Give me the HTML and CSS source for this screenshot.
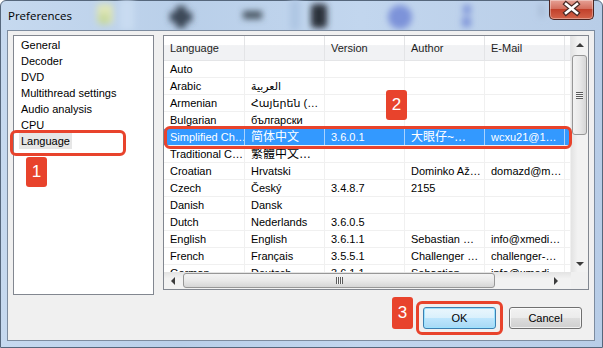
FILE: index.html
```html
<!DOCTYPE html>
<html lang="en">
<head>
  <meta charset="UTF-8">
  <title>Preferences</title>
  <link rel="stylesheet" href="styles.css">
</head>
<body>
  <div class="window">
    <div class="titlebar">
      <svg class="glass" width="603" height="30" viewBox="0 0 603 30">
        <defs>
          <filter id="fuzz" x="-50%" y="-50%" width="200%" height="200%">
            <feGaussianBlur stdDeviation="3.2"/>
          </filter>
        </defs>
        <g filter="url(#fuzz)">
          <rect x="120" y="0" width="14" height="30" fill="#c9dcf1"/>
          <rect x="290" y="0" width="10" height="30" fill="#aec6e3"/>
          <rect x="97" y="4" width="16" height="20" rx="3" fill="#dfe6b8"/>
          <circle cx="104" cy="19" r="6" fill="#c8d9a0"/>
          <rect x="176" y="6" width="10" height="22" fill="#3b4756"/>
          <rect x="170" y="12" width="22" height="10" fill="#3b4756"/>
          <rect x="243" y="11" width="19" height="8" fill="#4a5663"/>
          <rect x="311" y="4" width="16" height="24" rx="4" fill="#2c333b"/>
          <circle cx="400" cy="17" r="12" fill="#7d93d9"/>
          <rect x="463" y="5" width="8" height="9" fill="#8197da"/>
          <rect x="462" y="17" width="9" height="10" fill="#8197da"/>
          <rect x="539" y="4" width="5" height="13" fill="#a9bcd6"/>
        </g>
      </svg>
      <span class="title">Preferences</span>
      <button class="close-btn">
        <svg width="45" height="20" viewBox="0 0 45 20">
          <path d="M17 5 L28 14 M28 5 L17 14" stroke="#4a2a26" stroke-width="5" stroke-linecap="square"/>
          <path d="M17 5 L28 14 M28 5 L17 14" stroke="#fff" stroke-width="2.6" stroke-linecap="square"/>
        </svg>
      </button>
    </div>

    <div class="client">
      <ul class="pages">
        <li><span>General</span></li>
        <li><span>Decoder</span></li>
        <li><span>DVD</span></li>
        <li><span>Multithread settings</span></li>
        <li><span>Audio analysis</span></li>
        <li><span>CPU</span></li>
        <li class="current"><span>Language</span></li>
      </ul>

      <div class="right">
        <div class="listview">
          <div class="lv-top">
            <div class="lv-table">
              <div class="lv-head">
                <div class="cell">Language</div>
                <div class="cell"></div>
                <div class="cell">Version</div>
                <div class="cell">Author</div>
                <div class="cell">E-Mail</div>
                <div class="cell fill"></div>
              </div>
              <div class="lv-row"><div class="cell">Auto</div><div class="cell"></div><div class="cell"></div><div class="cell"></div><div class="cell"></div><div class="cell fill"></div></div>
              <div class="lv-row"><div class="cell">Arabic</div><div class="cell">العربية</div><div class="cell"></div><div class="cell"></div><div class="cell"></div><div class="cell fill"></div></div>
              <div class="lv-row"><div class="cell">Armenian</div><div class="cell">Հայերեն (…</div><div class="cell"></div><div class="cell"></div><div class="cell"></div><div class="cell fill"></div></div>
              <div class="lv-row"><div class="cell">Bulgarian</div><div class="cell">български</div><div class="cell"></div><div class="cell"></div><div class="cell"></div><div class="cell fill"></div></div>
              <div class="lv-row selected"><div class="cell">Simplified Ch…</div><div class="cell cjk">简体中文</div><div class="cell">3.6.0.1</div><div class="cell cjk">大眼仔~…</div><div class="cell">wcxu21@1…</div><div class="cell fill"></div></div>
              <div class="lv-row"><div class="cell">Traditional C…</div><div class="cell cjk">繁體中文…</div><div class="cell"></div><div class="cell"></div><div class="cell"></div><div class="cell fill"></div></div>
              <div class="lv-row"><div class="cell">Croatian</div><div class="cell">Hrvatski</div><div class="cell"></div><div class="cell">Dominko Až…</div><div class="cell">domazd@m…</div><div class="cell fill"></div></div>
              <div class="lv-row"><div class="cell">Czech</div><div class="cell">Český</div><div class="cell">3.4.8.7</div><div class="cell">2155</div><div class="cell"></div><div class="cell fill"></div></div>
              <div class="lv-row"><div class="cell">Danish</div><div class="cell">Dansk</div><div class="cell"></div><div class="cell"></div><div class="cell"></div><div class="cell fill"></div></div>
              <div class="lv-row"><div class="cell">Dutch</div><div class="cell">Nederlands</div><div class="cell">3.6.0.5</div><div class="cell"></div><div class="cell"></div><div class="cell fill"></div></div>
              <div class="lv-row"><div class="cell">English</div><div class="cell">English</div><div class="cell">3.6.1.1</div><div class="cell">Sebastian …</div><div class="cell">info@xmedi…</div><div class="cell fill"></div></div>
              <div class="lv-row"><div class="cell">French</div><div class="cell">Français</div><div class="cell">3.5.5.1</div><div class="cell">Challenger …</div><div class="cell">challenger-…</div><div class="cell fill"></div></div>
              <div class="lv-row"><div class="cell">German</div><div class="cell">Deutsch</div><div class="cell">3.6.1.1</div><div class="cell">Sebastian …</div><div class="cell">info@xmedi…</div><div class="cell fill"></div></div>
            </div>
            <div class="vscroll">
              <div class="sb-btn"><i class="arrow up"></i></div>
              <div class="sb-track">
                <div class="thumb-v"><i class="grip-v"></i></div>
              </div>
              <div class="sb-btn"><i class="arrow down"></i></div>
            </div>
          </div>
          <div class="hscroll">
            <div class="sb-btn"><i class="arrow left"></i></div>
            <div class="sb-track">
              <div class="thumb-h"><i class="grip-h"></i></div>
            </div>
            <div class="sb-btn"><i class="arrow right"></i></div>
            <div class="corner"></div>
          </div>
        </div>

        <div class="buttons">
          <button class="btn default">OK</button>
          <button class="btn">Cancel</button>
        </div>
      </div>
    </div>

    <!-- red callouts drawn over the dialog -->
    <div class="mark mark-lang"></div>
    <div class="badge badge-1">1</div>
    <div class="mark mark-row"></div>
    <div class="badge badge-2">2</div>
    <div class="mark mark-ok"></div>
    <div class="badge badge-3">3</div>
  </div>
</body>
</html>
```

FILE: styles.css
```css
* {
  box-sizing: border-box;
}
body {
  margin: 0;
  width: 603px;
  height: 348px;
  overflow: hidden;
  font-family: 'Liberation Sans', 'Noto Sans CJK SC', 'DejaVu Sans', sans-serif;
  font-size: 11px;
  color: #000;
}
.window {
  position: relative;
  width: 603px;
  height: 348px;
  background: linear-gradient(to right, #c6d9ef, #b9cfe9 30%, #c2d6ee 60%, #b8cde7);
  border: 1px solid #56677c;
  border-radius: 6px 6px 0 0;
}
.titlebar {
  position: relative;
  height: 29px;
  display: flex;
  align-items: flex-start;
}
.glass {
  position: absolute;
  top: -1px;
  left: -1px;
  pointer-events: none;
}
.title {
  position: relative;
  padding: 7px 0 0 7px;
  font-family: 'Open Sans', 'Liberation Sans', sans-serif;
  font-size: 11.5px;
  color: #000;
}
.close-btn {
  position: relative;
  margin: -1px 8px 0 auto;
  width: 45px;
  height: 20px;
  padding: 0;
  border: 1px solid #4b2521;
  border-top: none;
  border-radius: 0 0 5px 5px;
  background: linear-gradient(#e6a195, #d4705f 45%, #c2412b 50%, #d3634a);
  box-shadow: inset 0 0 0 1px rgba(255, 255, 255, 0.35);
}
.close-btn svg {
  display: block;
  margin: -1px 0 0 -1px;
}

/* dialog body */
.client {
  width: 588px;
  height: 311px;
  margin-left: 6px;
  border: 1px solid #7d8c9f;
  background: #f0f0f0;
  padding: 4px 5px 0 5px;
  display: flex;
  gap: 9px;
}
.pages {
  list-style: none;
  margin: 0;
  padding: 1px 0 0 5px;
  width: 141px;
  height: 260px;
  background: #fff;
  border: 1px solid #828790;
}
.pages li {
  height: 16px;
  line-height: 16px;
}
.pages li span {
  padding: 0 2px;
  display: inline-block;
}
.pages li.current span {
  background: #e6e6e6;
}
.right {
  flex: 1;
  display: flex;
  flex-direction: column;
}
.listview {
  width: 426px;
  height: 255px;
  border: 1px solid #828790;
  background: #fff;
  display: flex;
  flex-direction: column;
}
.lv-top {
  display: flex;
  height: 236px;
}
.lv-table {
  width: 407px;
  overflow: hidden;
}
.lv-head,
.lv-row {
  display: flex;
}
.cell {
  width: 80px;
  flex: none;
  padding-left: 6px;
  white-space: nowrap;
  overflow: hidden;
  border-right: 1px solid #f0f0f0;
}
.cell:first-child {
  width: 81px;
}
.cell.fill {
  width: 6px;
  padding: 0;
}
.cjk {
  font-size: 12px;
}
.lv-head {
  height: 25px;
  background: linear-gradient(#fff 0, #fff 36%, #f1f2f4 40%, #f1f2f4 100%);
  border-bottom: 1px solid #e4e5e7;
}
.lv-head .cell {
  line-height: 24px;
  border-right-color: #e3e4e6;
  color: #1e1e1e;
}
.lv-row {
  height: 17px;
  border-bottom: 1px solid #f0f0f0;
}
.lv-row .cell {
  line-height: 17px;
}
.lv-row.selected {
  background: #3399ff;
  color: #fff;
}
.lv-row.selected .cell {
  border-right-color: #a9d2ff;
}

/* scrollbars */
.vscroll {
  width: 17px;
  display: flex;
  flex-direction: column;
  background: linear-gradient(to right, #e3e3e3, #f2f2f2 40%, #f2f2f2);
}
.hscroll {
  height: 17px;
  display: flex;
  background: linear-gradient(#e3e3e3, #f2f2f2 40%, #f2f2f2);
}
.sb-btn {
  width: 17px;
  height: 17px;
  flex: none;
  display: flex;
  align-items: center;
  justify-content: center;
}
.sb-track {
  flex: 1;
}
.vscroll .sb-track {
  padding: 2px 0 0 1px;
}
.hscroll .sb-track {
  padding: 1px 0 0 2px;
}
.thumb-v {
  width: 15px;
  height: 80px;
  border: 1px solid #979797;
  border-radius: 3px;
  background: linear-gradient(to right, #f3f3f3, #e9e9e9 50%, #d6d6d6);
  display: flex;
  align-items: center;
  justify-content: center;
}
.thumb-h {
  width: 312px;
  height: 15px;
  border: 1px solid #979797;
  border-radius: 3px;
  background: linear-gradient(#f3f3f3, #e9e9e9 50%, #d6d6d6);
  display: flex;
  align-items: center;
  justify-content: center;
}
.grip-v {
  width: 7px;
  height: 7px;
  background: repeating-linear-gradient(#5c5c5c 0 1px, #f5f5f5 1px 2px);
}
.grip-h {
  width: 7px;
  height: 7px;
  background: repeating-linear-gradient(to right, #5c5c5c 0 1px, #f5f5f5 1px 2px);
}
.arrow {
  width: 0;
  height: 0;
  border: 4px solid transparent;
}
.arrow.up {
  border-bottom-color: #3c3c3c;
  border-top-width: 0;
}
.arrow.down {
  border-top-color: #3c3c3c;
  border-bottom-width: 0;
}
.arrow.left {
  border-right-color: #3c3c3c;
  border-left-width: 0;
}
.arrow.right {
  border-left-color: #3c3c3c;
  border-right-width: 0;
}
.corner {
  width: 17px;
  height: 17px;
  background: #f0f0f0;
}

/* dialog buttons */
.buttons {
  display: flex;
  justify-content: flex-end;
  gap: 13px;
  margin-top: 17px;
  padding-right: 7px;
}
.btn {
  width: 73px;
  height: 22px;
  font: inherit;
  font-size: 11px;
  border: 1px solid #707070;
  border-radius: 3px;
  background: linear-gradient(#f2f2f2, #ebebeb 50%, #dddddd 50%, #cfcfcf);
  box-shadow: inset 0 0 0 1px rgba(255, 255, 255, 0.7);
}
.btn.default {
  border-color: #3c7fb1;
  background: linear-gradient(#eaf6fd, #d9f0fc 50%, #bee6fd 50%, #a7d9f5);
  box-shadow: inset 0 0 0 1px #9ce3ff;
}

/* callouts */
.mark {
  position: absolute;
  border: 3px solid #e8432c;
  border-radius: 6px;
}
.mark-lang {
  left: 9px;
  top: 129px;
  width: 116px;
  height: 26px;
}
.mark-row {
  left: 163px;
  top: 125px;
  width: 408px;
  height: 23px;
}
.mark-ok {
  left: 415px;
  top: 300px;
  width: 87px;
  height: 34px;
}
.badge {
  position: absolute;
  width: 21px;
  height: 30px;
  background: #e8432c;
  border-radius: 3px;
  color: #fff;
  font-family: 'Liberation Sans', sans-serif;
  font-size: 17px;
  line-height: 30px;
  text-align: center;
}
.badge-1 {
  left: 25px;
  top: 156px;
}
.badge-2 {
  left: 385px;
  top: 89px;
  height: 30px;
}
.badge-3 {
  left: 391px;
  top: 296px;
  height: 32px;
  line-height: 31px;
}
```
